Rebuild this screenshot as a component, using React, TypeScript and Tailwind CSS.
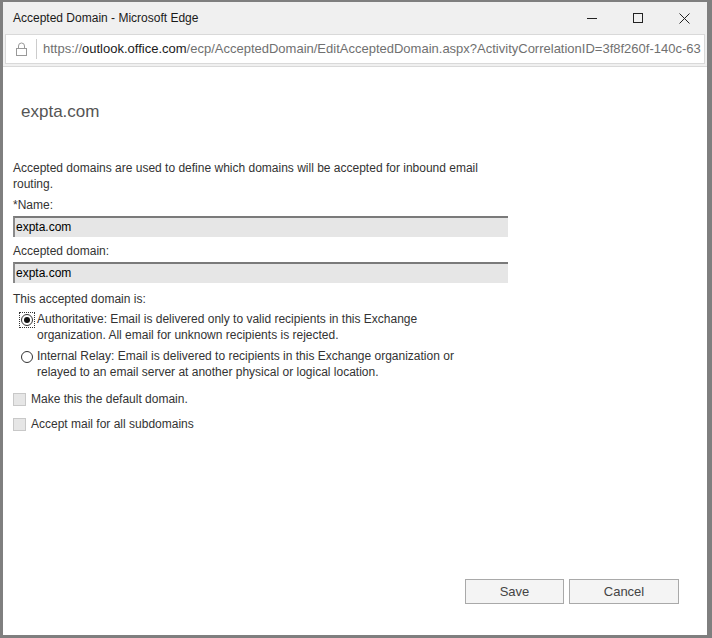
import React from "react";

const font = { fontFamily: '"Liberation Sans", Arial, sans-serif' };

const Radio = ({ checked, focused }: { checked?: boolean; focused?: boolean }) => (
  <span
    className={
      "mt-[2px] flex h-[14px] w-[14px] shrink-0 items-center justify-center " +
      (focused ? "outline outline-1 outline-dotted outline-[#333]" : "")
    }
  >
    <span className="flex h-[12px] w-[12px] items-center justify-center rounded-full border border-[#333] bg-white">
      {checked && <span className="h-[6px] w-[6px] rounded-full bg-[#111]" />}
    </span>
  </span>
);

const Checkbox = () => (
  <span className="h-[13px] w-[13px] shrink-0 border border-[#c8c8c8] bg-[#e6e6e6]" />
);

const Field = ({ value }: { value: string }) => (
  <div className="mt-[3px] h-[21px] w-[495px] border-t-2 border-l-2 border-[#7a7a7a] border-l-[#8a8a8a] bg-[#e6e6e6] pl-[1px] text-[12px] leading-[18px] text-black">
    {value}
  </div>
);

export default function App() {
  return (
    <div
      style={font}
      className="flex h-[638px] w-[712px] flex-col border-t-2 border-l-[3px] border-r-[5px] border-b-[3px] border-[#7f7f7f] bg-white text-[#333]"
    >
      {/* title bar */}
      <div className="flex h-[32px] items-center bg-[#f0f0f0] pl-[10px]">
        <span className="text-[12px] text-[#1a1a1a]">Accepted Domain - Microsoft Edge</span>
        <div className="ml-auto flex h-full items-center">
          <div className="flex h-full w-[46px] items-center justify-center">
            <span className="h-px w-[10px] bg-[#222]" />
          </div>
          <div className="flex h-full w-[46px] items-center justify-center">
            <span className="h-[10px] w-[10px] border border-[#222]" />
          </div>
          <div className="flex h-full w-[46px] items-center justify-center">
            <svg width="11" height="11" viewBox="0 0 11 11">
              <path d="M0.5 0.5 L10.5 10.5 M10.5 0.5 L0.5 10.5" stroke="#222" strokeWidth="1" />
            </svg>
          </div>
        </div>
      </div>

      {/* address bar */}
      <div className="bg-[#f0f0f0] px-[2px] pb-[2px]">
        <div className="flex h-[30px] items-center overflow-hidden whitespace-nowrap border border-[#d9d9d9] bg-white">
          <div className="flex w-[30px] shrink-0 justify-center">
            <svg width="11" height="14" viewBox="0 0 11 14">
              <path d="M2.5 6 V4 a3 3 0 0 1 6 0 V6" fill="none" stroke="#999" strokeWidth="1" />
              <rect x="0.5" y="6.5" width="10" height="7" fill="none" stroke="#999" strokeWidth="1" />
            </svg>
          </div>
          <span className="h-[20px] w-px shrink-0 bg-[#ccc]" />
          <span className="pl-[6px] text-[13px] text-[#707070]">
            https://<span className="text-[#1a1a1a]">outlook.office.com</span>
            /ecp/AcceptedDomain/EditAcceptedDomain.aspx?ActivityCorrelationID=3f8f260f-140c-63
          </span>
        </div>
      </div>
      <div className="h-px bg-[#d9d9d9]" />

      {/* content */}
      <div className="flex flex-1 flex-col px-[10px] text-[12px] leading-[16px]">
        <h1 className="mt-[34px] pl-[8px] text-[17px] font-normal leading-[22px] text-[#555]">expta.com</h1>

        <p className="mt-[37px] w-[480px]">
          Accepted domains are used to define which domains will be accepted for inbound email routing.
        </p>

        <label className="mt-[5px] block">*Name:</label>
        <Field value="expta.com" />

        <label className="mt-[6px] block">Accepted domain:</label>
        <Field value="expta.com" />

        <p className="mt-[8px]">This accepted domain is:</p>

        <div className="mt-[4px] flex flex-col gap-[5px] pl-[7px]">
          <div className="flex gap-[3px]">
            <Radio checked focused />
            <span className="w-[420px]">
              Authoritative: Email is delivered only to valid recipients in this Exchange organization. All email for unknown recipients is rejected.
            </span>
          </div>
          <div className="flex gap-[3px]">
            <Radio />
            <span className="w-[430px]">
              Internal Relay: Email is delivered to recipients in this Exchange organization or relayed to an email server at another physical or logical location.
            </span>
          </div>
        </div>

        <div className="mt-[11px] flex items-center gap-[5px]">
          <Checkbox />
          <span>Make this the default domain.</span>
        </div>
        <div className="mt-[9px] flex items-center gap-[5px]">
          <Checkbox />
          <span>Accept mail for all subdomains</span>
        </div>

        <div className="mt-auto mb-[31px] flex justify-end gap-[5px] pr-[18px]">
          <button className="h-[25px] w-[99px] border border-[#a9a9a9] bg-[#f4f4f4] text-[13px] text-[#444]">
            Save
          </button>
          <button className="h-[25px] w-[110px] border border-[#a9a9a9] bg-[#f4f4f4] text-[13px] text-[#444]">
            Cancel
          </button>
        </div>
      </div>
    </div>
  );
}
